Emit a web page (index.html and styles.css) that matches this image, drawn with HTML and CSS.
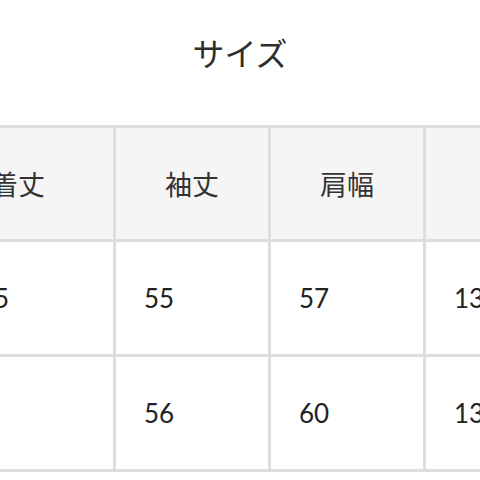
FILE: index.html
```html
<!DOCTYPE html>
<html lang="ja">
<head>
<meta charset="utf-8">
<link rel="stylesheet" href="styles.css">
</head>
<body>
<div class="page">
  <h2 class="title">サイズ</h2>
  <div class="size-table">
    <div class="cell head">着丈</div>
    <div class="cell head">袖丈</div>
    <div class="cell head">肩幅</div>
    <div class="cell head">身幅</div>

    <div class="cell num first">65</div>
    <div class="cell num">55</div>
    <div class="cell num">57</div>
    <div class="cell num">130</div>

    <div class="cell num first"></div>
    <div class="cell num">56</div>
    <div class="cell num">60</div>
    <div class="cell num">136</div>
  </div>
</div>
</body>
</html>
```

FILE: styles.css
```css
html, body {
  margin: 0;
  padding: 0;
  background: #ffffff;
  overflow: hidden;
  width: 480px;
  height: 480px;
}

.page {
  width: 480px;
}

.title {
  margin: 0;
  padding-top: 30px;
  font-family: "Noto Sans CJK JP", "Noto Sans", sans-serif;
  font-weight: 400;
  font-size: 32px;
  line-height: 45px;
  color: #2e2e2e;
  text-align: center;
}

.size-table {
  margin-top: 50px;
  margin-left: -80px;
  width: max-content;
  display: grid;
  grid-template-columns: 190px 152px 152px 210px;
  grid-template-rows: 111px 112px 112px;
  gap: 3px;
  background: #dedede;
  border: 3px solid #dedede;
}

.cell {
  background: #ffffff;
  display: flex;
  align-items: center;
  color: #222222;
}

.head {
  background: #f5f5f5;
  justify-content: center;
  font-family: "Noto Sans CJK JP", "Noto Sans", sans-serif;
  font-size: 27px;
  color: #333333;
}

.num {
  font-family: Lato, "Liberation Sans", sans-serif;
  font-size: 26px;
  padding-left: 28px;
}

.num.first {
  padding-left: 56px;
}
```
